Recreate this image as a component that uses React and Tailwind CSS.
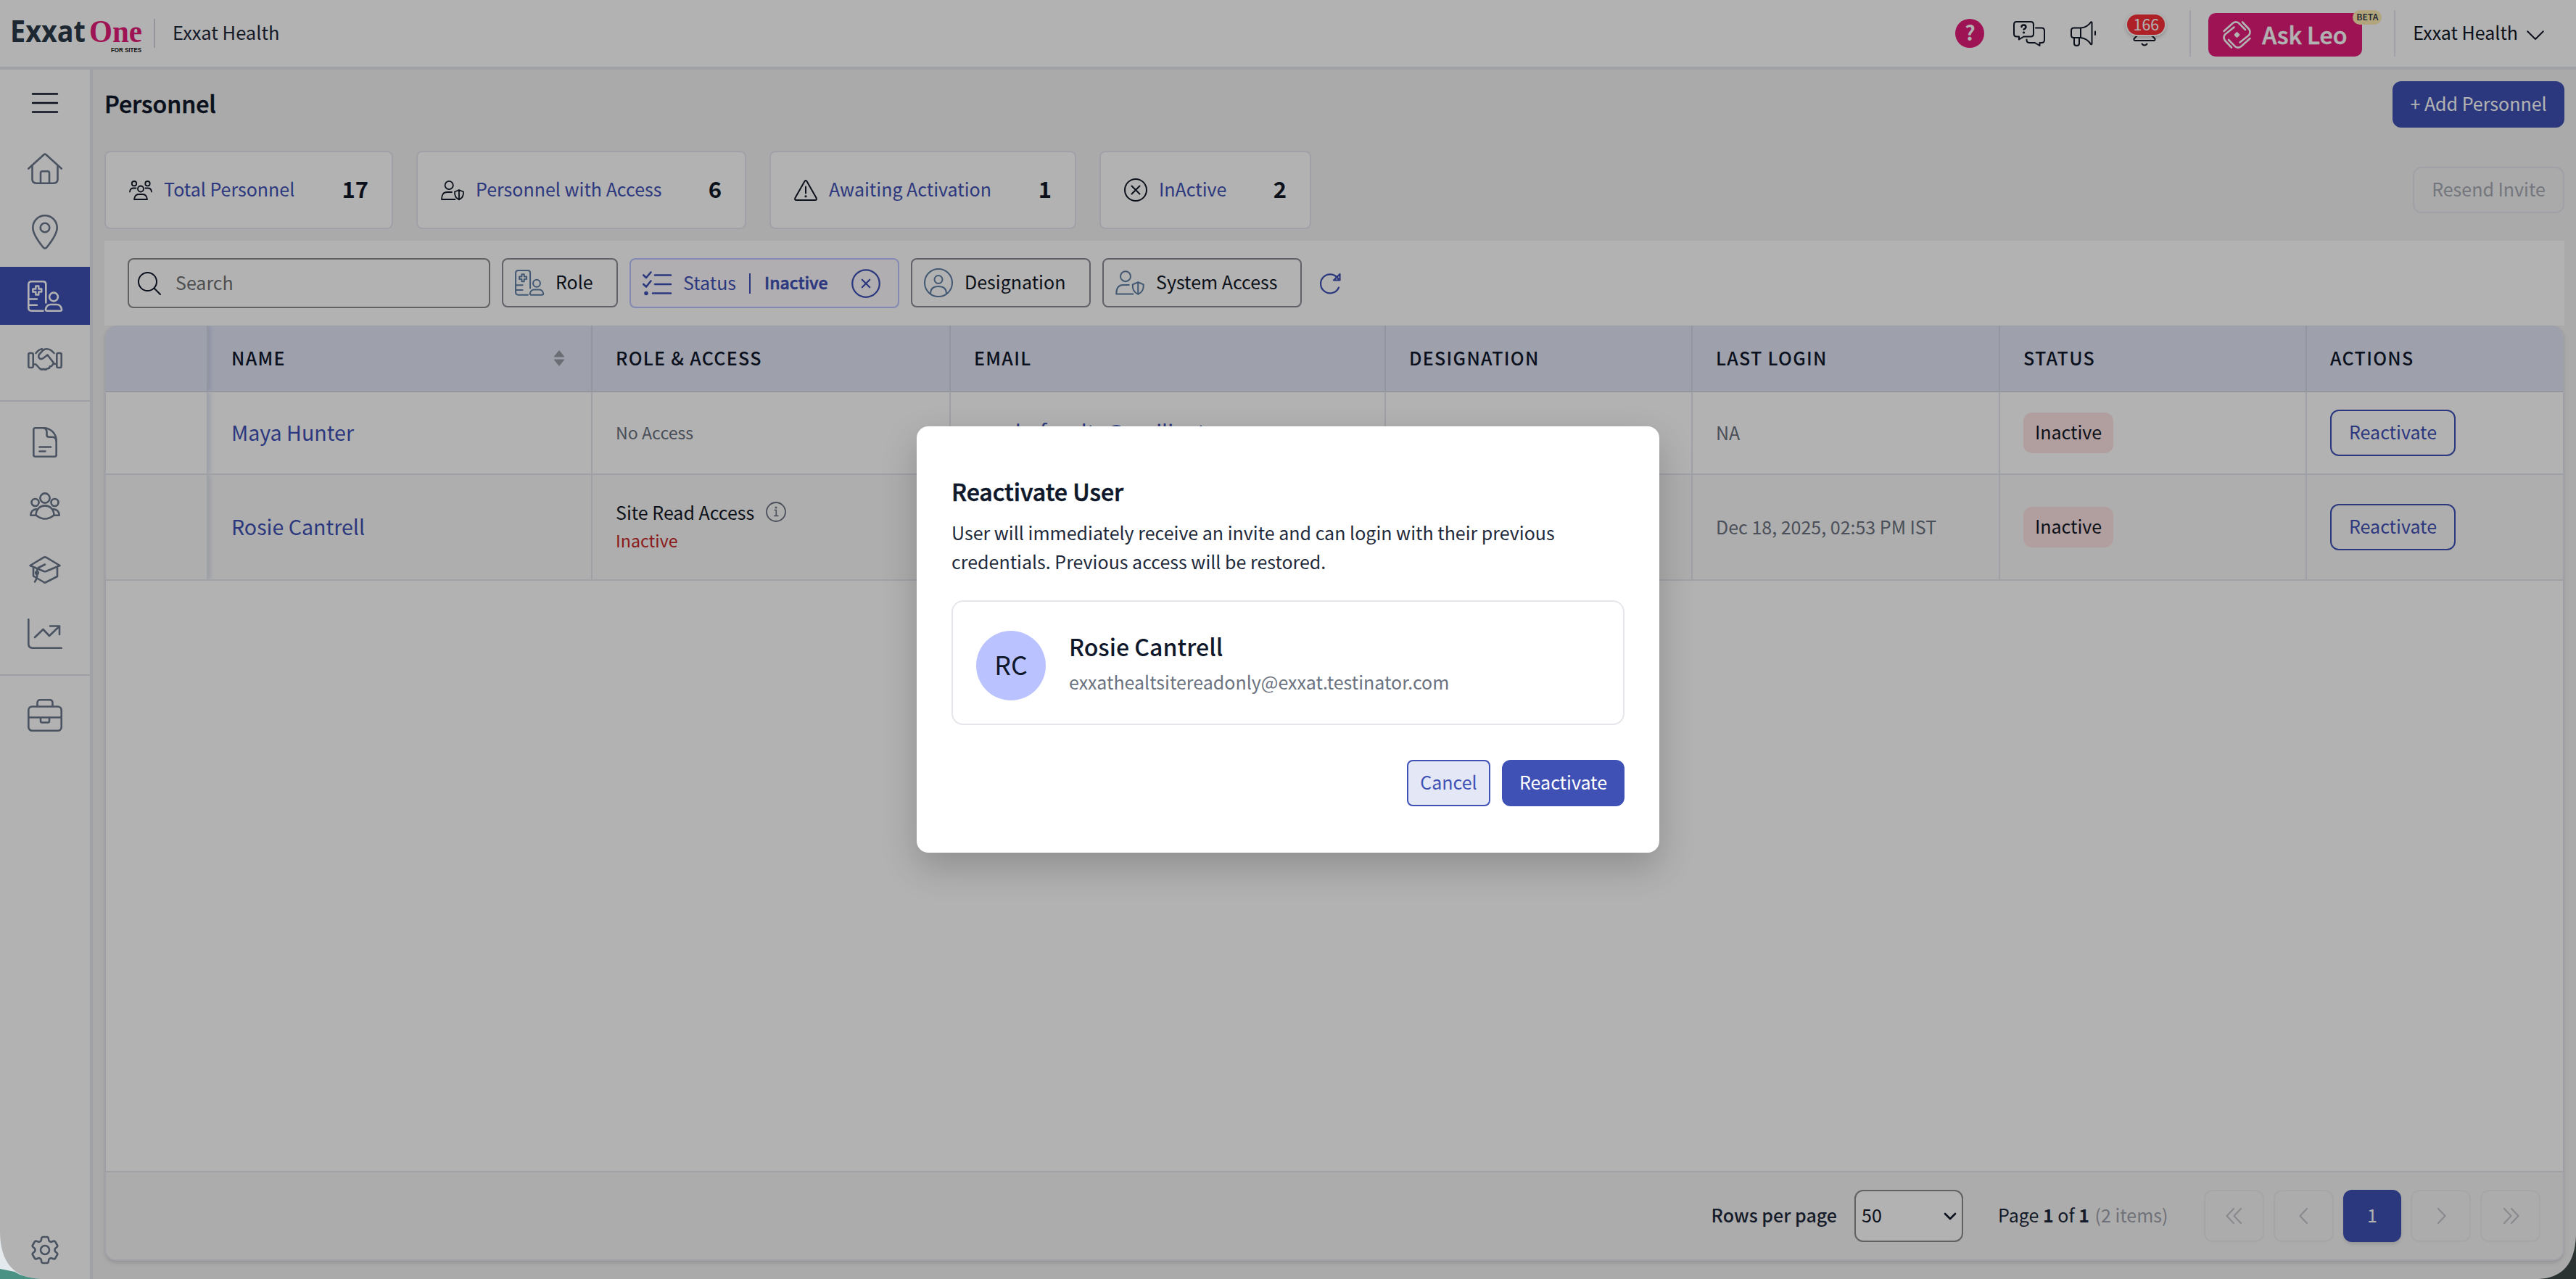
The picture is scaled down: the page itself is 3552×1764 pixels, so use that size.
import React from "react";
import { HiOutlineCog6Tooth } from "react-icons/hi2";

/* ---------- icons ---------- */

function Icon({ w, h, stroke = 2.6, className = "", size, children }) {
  return (
    <svg
      width={size || w}
      height={size ? (size * h) / w : h}
      viewBox={`0 0 ${w} ${h}`}
      fill="none"
      stroke="currentColor"
      strokeWidth={stroke}
      strokeLinecap="round"
      strokeLinejoin="round"
      className={"shrink-0 overflow-visible " + className}
    >
      {children}
    </svg>
  );
}

const MenuIcon = () => (
  <Icon w={36} h={28} stroke={2.4} className="text-[#0f172a]">
    <path d="M1 1.500h34M1 14h34M1 26.500h34" />
  </Icon>
);

const HomeIcon = () => (
  <Icon w={48} h={43}>
    <path d="M1.300 21.500 22.500 2.200q1.500-1.200 3 0L46.700 21.500" />
    <path d="M6.500 17.500V36q0 5.700 5.700 5.700h23.600q5.700 0 5.700-5.700V17.500" />
    <path d="M18 41V27.500q0-2.200 2.200-2.200h7.600q2.200 0 2.200 2.200V41" />
  </Icon>
);

const PinIcon = () => (
  <Icon w={36} h={48}>
    <path d="M18 46.500q-1.500 0-3-2C9 37 1.300 26.500 1.300 18a16.700 16.700 0 0 1 33.400 0c0 8.500-7.700 19-13.700 26.500q-1.500 2-3 2Z" />
    <circle cx="18" cy="18" r="6.300" />
  </Icon>
);

const StaffIcon = ({ size, stroke, className }) => (
  <Icon w={48} h={43} size={size} stroke={stroke} className={className}>
    <path d="M21.500 41.700H5.300q-4 0-4-4V5.300q0-4 4-4h16q4 0 4 4V30.500" />
    <path d="M1.300 25.500h11.500M1.300 33.700h11.500" />
    <path d="M11.300 7.500h4v4h4v4h-4v4h-4v-4h-4v-4h4Z" strokeWidth={2.4} />
    <circle cx="36" cy="22.500" r="5.900" />
    <path d="M27 41.700q-2.500 0-2-2.500Q26.500 33 32 33h8q5.500 0 7 6.200.500 2.500-2 2.500Z" />
  </Icon>
);

const HandshakeIcon = () => (
  <Icon w={48} h={32}>
    <rect x="1.300" y="7" width="6.400" height="20" rx="2" />
    <rect x="40.300" y="7" width="6.400" height="20" rx="2" />
    <path d="M11.500 7q4-5 8.500-5.700M36.500 7q-5-5.700-10-5.700-3 0-5.500 2l-5 5.500q-1.500 3 0 5 2.500 2.500 6 0l5.500-4.300 8.500 11" />
    <path d="M8 22.500h3.500l5 5.500q2.500 2.500 5.500 1 3 1.500 5-.500 3.500 0 3.500-3 3.500 0 4.500-3.500H40" />
  </Icon>
);

const DocIcon = () => (
  <Icon w={34} h={42}>
    <path d="M15 1.300H3.800q-2.500 0-2.500 2.500v34.400q0 2.500 2.500 2.500h26.400q2.500 0 2.500-2.500V19.500C32.700 9 25 1.300 15 1.300Z" />
    <path d="M15 1.300q4.500 1 4.500 5.500v4q0 3 3 3h4.500q5 0 5.700 5.500M9.500 27.500h15.500M9.500 33.500h8" />
  </Icon>
);

const GroupIcon = () => (
  <Icon w={42} h={38}>
    <circle cx="21" cy="8" r="6.600" />
    <circle cx="7.500" cy="14" r="5" />
    <circle cx="34.500" cy="14" r="5" />
    <path d="M8.500 31.500C9 14 33 14 33.500 31.500q-12.500 10-25 0Z" />
    <path d="M10.500 23.500C4.500 22.500 1.500 27 1.300 31.700h7M31.500 23.500c6-1 9 3.500 9.200 8.200h-7" />
  </Icon>
);

const GradIcon = () => (
  <Icon w={44} h={38}>
    <path d="M20.500 1.700q1.500-.700 3 0L42.500 13 23.500 21q-1.500.600-3 0L1.500 13Z" />
    <path d="M6 16v11.500l14.500 8.500q1.500.800 3 0L39 28V16" />
    <path d="M22 11.500 13 16q-2 1.300-2 4v8q0 3.500-3 7.500" />
    <circle cx="11" cy="23" r="1.800" fill="currentColor" />
  </Icon>
);

const ChartIcon = () => (
  <Icon w={48} h={42}>
    <path d="M1.300 1.300v34q0 5.400 5.400 5.400h40" />
    <path d="M10 26l11.500-11 8.500 9L43.500 11M31 10.500h13V22" />
  </Icon>
);

const BriefcaseIcon = () => (
  <Icon w={48} h={45}>
    <rect x="1.300" y="10.500" width="45.400" height="33.200" rx="5" />
    <path d="M13.500 10V5.500q0-4.200 4.200-4.200h12.600q4.200 0 4.200 4.200V10M1.300 25.500h45.400M18 26v4.500q0 2 2 2h8q2 0 2-2V26" />
  </Icon>
);

const TeamIcon = () => (
  <Icon w={32} h={27} stroke={1.8}>
    <circle cx="7" cy="4.200" r="3.200" />
    <circle cx="25.500" cy="4.200" r="3.200" />
    <circle cx="16" cy="11.500" r="4" />
    <path d="M1 15.500q.500-5 5-5h3.500M31 15.500q-.500-5-5-5h-3.500M7 26h18q-1-7-6-7h-6q-5 0-6 7Z" />
  </Icon>
);

const AccessIcon = ({ size, stroke = 1.8, className }) => (
  <Icon w={32} h={27} size={size} stroke={stroke} className={className}>
    <circle cx="11.200" cy="6.500" r="5.600" />
    <path d="M19.500 26H1q0-10 7.500-10H15" />
    <path d="M25 13l6 2.500q.500 8-6 10.800-6.500-2.800-6-10.800ZM25 13v13" />
  </Icon>
);

const WarnIcon = () => (
  <Icon w={32} h={29} stroke={2}>
    <path d="M14.500 2q1.500-2 3 0L30.600 25q1 3-1.600 3H3q-2.600 0-1.600-3ZM16 9.500v9" />
    <circle cx="16" cy="22.800" r=".6" fill="currentColor" />
  </Icon>
);

const CrossCircleIcon = ({ size = 32, stroke = 2, small = false }) => (
  <Icon w={32} h={32} size={size} stroke={stroke}>
    <circle cx="16" cy="16" r="15" />
    <path d={small ? "M11.800 11.800l8.400 8.400M20.200 11.800l-8.400 8.400" : "M10.500 10.500l11 11M21.500 10.500l-11 11"} />
  </Icon>
);

const SearchIcon = () => (
  <Icon w={32} h={32} stroke={2} className="text-[#0f172a]">
    <circle cx="13.500" cy="13.500" r="12.500" />
    <path d="M22.500 22.500 31 31" />
  </Icon>
);

const ChecklistIcon = () => (
  <Icon w={40} h={33} stroke={2.6}>
    <path d="M1.300 5.500l3.700 3.500L11.500 1.500M1.300 18l3.700 3.500L11.500 13.500M17 5.500h22M17 18h22M14 30.500h25" />
    <circle cx="5" cy="30.500" r="1.500" fill="currentColor" />
  </Icon>
);

const UserCircleIcon = () => (
  <Icon w={40} h={40} stroke={2} className="text-[#5f7fa5]">
    <circle cx="20" cy="20" r="19" />
    <circle cx="20" cy="15.500" r="5.500" />
    <path d="M9 35q0-10 11-10t11 10" />
  </Icon>
);

const RefreshIcon = () => (
  <Icon w={30} h={30} stroke={2.2} className="text-[#3f51b5]">
    <path d="M27 20.500A13 13 0 1 1 25 7l2.500 3M28.500 2v8.500H20Z" />
  </Icon>
);

const ChatIcon = () => (
  <Icon w={44} h={35} stroke={2}>
    <path d="M4.500 1H24q4 0 4 4v12.500q0 4-4 4H14.500L8 25.500v-4H4.500q-3.500 0-3.500-4V5q0-4 3.500-4Z" />
    <path d="M11.500 8q0-2.500 3-2.500t3 2.700q0 1.800-3 3.300" strokeWidth={2.4} />
    <circle cx="14.500" cy="15.800" r=".6" fill="currentColor" />
    <path d="M31 9.500h8q4 0 4 4V26q0 4-4 4h-2.500v4L30 30h-7.500q-4 0-4-4v-.500" />
  </Icon>
);

const MegaphoneIcon = () => (
  <Icon w={36} h={35} stroke={2}>
    <path d="M14 9.500H4.500Q1 9.500 1 13v6.500Q1 23 4.500 23H14ZM14 9.500Q23 9 28 1.500q1.500-1 1.500 1V31q0 2-1.500 1Q23 24 14 23M5 23v8q0 3 3.500 3t3.500-3v-8M34 14.500v4.500" />
  </Icon>
);

const BellIcon = () => (
  <Icon w={32} h={36} stroke={2}>
    <path d="M6 21v-8a10 10 0 0 1 20 0v8l4.500 4.500q.500 2.500-2 2.500h-25q-2.500 0-2-2.500ZM12.500 32.500q3.500 4 7 0" />
  </Icon>
);

const LeoIcon = () => (
  <Icon w={39} h={38} stroke={2.6}>
    <path d="M1.500 14 14 2.800q4-2.800 8 0L31 12" />
    <path d="M27 1.500 36 11q3 4.500 0 8.500L23.500 29.500" />
    <path d="M37.500 24 25 35.200q-4 2.800-8 0L8 26" />
    <path d="M12 36.500 3 27q-3-4.500 0-8.500L15.500 8.500" />
    <path d="M19.500 16.500 22 19l-2.500 2.500L17 19Z" fill="currentColor" />
  </Icon>
);

const ChevronDown = () => (
  <Icon w={24} h={13} stroke={2}>
    <path d="M1.200 1.200 12 12 22.800 1.200" />
  </Icon>
);

const InfoIcon = () => (
  <Icon w={28} h={28} stroke={1.8} className="text-[#6b7280]">
    <circle cx="14" cy="14" r="13" />
    <path d="M12 11.500h2.300v8M11.500 19.500h5.500" strokeWidth={1.6} />
    <circle cx="14" cy="8" r=".6" fill="currentColor" />
  </Icon>
);

/* ---------- header ---------- */

function Logo() {
  return (
    <svg width="182" height="50" viewBox="0 0 182 50" className="shrink-0 overflow-visible">
      <text x="-2" y="37" fontSize="41" fontWeight="700" fill="#2b3a4a" textLength="104" lengthAdjust="spacingAndGlyphs" className="font-['Open_Sans',sans-serif]">
        Exxat
      </text>
      <text x="107" y="37" fontSize="45" fontWeight="700" fill="#e31c79" textLength="73" lengthAdjust="spacingAndGlyphs" className="font-['Liberation_Serif',serif]">
        One
      </text>
      <text x="137" y="51" fontSize="9" fontWeight="700" fill="#111" textLength="42" lengthAdjust="spacingAndGlyphs" className="font-['Liberation_Sans',sans-serif]">
        FOR SITES
      </text>
    </svg>
  );
}

function Header() {
  return (
    <header className="flex h-24 shrink-0 items-center justify-between border-b-4 border-[#e5e7ee] bg-white pl-4 pr-11 text-[#1e293b]">
      <div className="flex items-center">
        <Logo />
        <div className="ml-3.5 h-10 w-0.5 bg-[#d4d5de]" />
        <span className="ml-6 pb-1 text-[25.5px]">Exxat Health</span>
      </div>
      <div className="flex items-center text-[#111827]">
        <div className="flex size-10 items-center justify-center rounded-full bg-[#e31c79] pb-1 text-[28px] font-bold text-white">
          ?
        </div>
        <div className="ml-10">
          <ChatIcon />
        </div>
        <div className="ml-[35px]">
          <MegaphoneIcon />
        </div>
        <div className="relative ml-[50px]">
          <BellIcon />
          <span className="absolute -left-2 -top-2 flex h-7 w-[52px] items-center justify-center rounded-full bg-[#fa3239] pb-[3px] text-[21.4px] text-white shadow-[0_0_0_2px_#fff,0_2px_6px_rgba(0,0,0,0.4)]">
            166
          </span>
        </div>
        <div className="ml-[46px] h-16 w-0.5 bg-[#e5e6ef]" />
        <div className="relative ml-6 mt-1 flex h-15 w-[212px] items-center rounded-[10px] bg-[#e31c79] pl-5 text-[32.1px] font-medium text-white">
          <LeoIcon />
          <span className="ml-[15px] pb-0.5 [-webkit-text-stroke:0.6px]">Ask Leo</span>
          <span className="absolute -right-[27px] -top-1 flex h-5 w-10 items-center justify-center rounded-full bg-[#ffecb3] pb-0.5 text-[12.3px] font-medium text-[#1e293b]">
            BETA
          </span>
        </div>
        <div className="ml-11 h-16 w-0.5 bg-[#e5e6ef]" />
        <span className="ml-6 pb-1">Exxat Health</span>
        <div className="ml-3 pt-1">
          <ChevronDown />
        </div>
      </div>
    </header>
  );
}

/* ---------- sidebar ---------- */

function NavItem({ active = false, children }) {
  return (
    <div
      className={
        "flex h-20 w-full shrink-0 items-center justify-center " +
        (active ? "bg-[#3f51b5] text-white" : "text-[#6b778b]")
      }
    >
      {children}
    </div>
  );
}

function Sidebar() {
  return (
    <nav className="flex w-32 shrink-0 flex-col gap-2 border-r-4 border-[#e6e6ef] bg-white pt-1.5">
      <div className="mb-0.5">
        <NavItem>
          <MenuIcon />
        </NavItem>
      </div>
      <NavItem>
        <HomeIcon />
      </NavItem>
      <NavItem>
        <PinIcon />
      </NavItem>
      <NavItem active>
        <StaffIcon />
      </NavItem>
      <NavItem>
        <HandshakeIcon />
      </NavItem>
      <div className="my-2 h-0.5 shrink-0 bg-[#e2e3ec]" />
      <NavItem>
        <DocIcon />
      </NavItem>
      <NavItem>
        <GroupIcon />
      </NavItem>
      <NavItem>
        <GradIcon />
      </NavItem>
      <NavItem>
        <ChartIcon />
      </NavItem>
      <div className="mb-1.5 mt-2 h-0.5 shrink-0 bg-[#e2e3ec]" />
      <NavItem>
        <BriefcaseIcon />
      </NavItem>
      <div className="mt-auto">
        <NavItem>
          <HiOutlineCog6Tooth className="size-12" strokeWidth={1.3} />
        </NavItem>
      </div>
    </nav>
  );
}

/* ---------- page ---------- */

const stats = [
  { label: "Total Personnel", value: 17, icon: <TeamIcon />, width: "w-[398px]" },
  { label: "Personnel with Access", value: 6, icon: <AccessIcon />, width: "w-[455px]" },
  { label: "Awaiting Activation", value: 1, icon: <WarnIcon />, width: "w-[423px]" },
  { label: "InActive", value: 2, icon: <CrossCircleIcon />, width: "w-[292px]" },
];

function StatCard({ label, value, icon, width }) {
  return (
    <div className={"flex h-[108px] items-center rounded-lg border-2 border-[#e5e6ef] bg-white px-8 text-[#111827] " + width}>
      {icon}
      <span className="ml-4 pb-1 text-[#3f51b5]">{label}</span>
      <span className="ml-auto pb-1 text-[31px] font-bold">{value}</span>
    </div>
  );
}

function FilterChip({ icon, label, width }) {
  return (
    <div className={"flex h-[68px] items-center gap-4 rounded-lg border-2 border-[#8c8d95] px-4 text-[#111827] " + width}>
      {icon}
      <span className="pb-1">{label}</span>
    </div>
  );
}

function Toolbar() {
  return (
    <div className="flex h-[117px] shrink-0 items-start gap-4 bg-white pl-8 pt-6">
      <div className="flex h-[69px] w-[500px] items-center gap-5 rounded-lg border-2 border-[#8c8c8c] pl-3">
        <SearchIcon />
        <span className="pb-1 text-[#6f7175]">Search</span>
      </div>
      <FilterChip label="Role" width="w-40" icon={<StaffIcon size={40} stroke={2.4} className="text-[#5f7fa5]" />} />
      <div className="flex h-[69px] w-[372px] items-center rounded-lg border-2 border-[#bcc5ff] bg-[#fefaff] pl-4 text-[#3f51b5]">
        <ChecklistIcon />
        <span className="ml-4 pb-1">Status</span>
        <span className="ml-[18px] h-7 w-0.5 bg-[#3f51b5]" />
        <span className="ml-[19px] pb-1 text-[23px] font-medium [-webkit-text-stroke:0.6px]">Inactive</span>
        <div className="ml-8">
          <CrossCircleIcon size={40} stroke={1.8} small />
        </div>
      </div>
      <FilterChip label="Designation" width="w-[248px]" icon={<UserCircleIcon />} />
      <FilterChip label="System Access" width="w-[275px]" icon={<AccessIcon size={40} stroke={1.6} className="text-[#5f7fa5]" />} />
      <div className="ml-2 mt-5">
        <RefreshIcon />
      </div>
    </div>
  );
}

const grid = "grid grid-cols-[141px_530px_494px_600px_423px_424px_423px_1fr]";
const headings = ["", "Name", "Role & Access", "Email", "Designation", "Last Login", "Status", "Actions"];

// soft edge to the right of the pinned first column
const pinned = "shadow-[3px_0_6px_rgba(63,81,181,0.16)] [clip-path:inset(0_-12px_0_0)]";

function Cell({ className = "", border = "border-[#e5e6ef]", children }) {
  return <div className={"flex items-center border-r-2 px-8 last:border-r-0 " + border + " " + className}>{children}</div>;
}

function Row({ name, role, email, lastLogin, className }) {
  return (
    <div className={grid + " border-b-2 border-[#e5e6ef] " + className}>
      <Cell className={pinned} />
      <Cell>
        <span className="pb-0.5 text-[28.6px] text-[#3f51b5]">{name}</span>
      </Cell>
      <Cell>{role}</Cell>
      <Cell>{email && <span className="pb-1 text-[28.6px] text-[#3f51b5]">{email}</span>}</Cell>
      <Cell />
      <Cell>
        <span className="pb-0.5 text-[#6b7280]">{lastLogin}</span>
      </Cell>
      <Cell>
        <span className="flex h-14 w-[124px] items-center justify-center rounded-xl bg-[#fee2e2] pb-1 text-[#111827]">Inactive</span>
      </Cell>
      <Cell>
        <span className="flex h-16 w-[173px] items-center justify-center rounded-xl border-2 border-[#3f51b5] pb-1 text-[#3f51b5]">
          Reactivate
        </span>
      </Cell>
    </div>
  );
}

function PageButton({ double = false, flip = false }) {
  return (
    <div className="flex h-18 w-[83px] items-center justify-center rounded-xl border-2 border-[#eeeef1] text-[#c4c6cc]">
      <Icon w={22} h={22} stroke={2.2} className={flip ? "-scale-x-100" : ""}>
        {double ? <path d="M10 1 .5 11 10 21M20 1 10.500 11 20 21" /> : <path d="M15 1 5.500 11 15 21" />}
      </Icon>
    </div>
  );
}

function Pagination() {
  return (
    <div className="flex h-[122px] shrink-0 items-center justify-end border-t-2 border-[#e5e6ef] bg-[#f7f7f7] pr-[31px] text-[#1e293b]">
      <span className="pb-1 font-medium">Rows per page</span>
      <div className="ml-6 flex h-18 w-[150px] items-center justify-between rounded-xl border-2 border-[#8c8c8c] bg-white pl-2 pr-2 text-[#0f172a]">
        <span className="pb-1">50</span>
        <Icon w={16} h={9} stroke={2.6}>
          <path d="M1 1l7 7 7-7" />
        </Icon>
      </div>
      <span className="ml-12 w-[284px] whitespace-nowrap pb-1">
        Page <b className="font-bold">1</b> of <b className="font-bold">1</b> <span className="ml-0.5 text-[#a0a2ac]">(2 items)</span>
      </span>
      <div className="flex gap-[13px]">
        <PageButton double />
        <PageButton />
        <div className="flex h-18 w-20 items-center justify-center rounded-xl bg-[#3f51b5] pb-1 text-white shadow-md">1</div>
        <PageButton flip />
        <PageButton double flip />
      </div>
    </div>
  );
}

function PersonnelTable() {
  return (
    <div className="flex h-[1290px] flex-col overflow-hidden rounded-2xl border-2 border-t-0 border-[#e5e6ef] bg-white shadow-md">
      <div className={grid + " h-[92px] shrink-0 border-b-2 border-[#d5d7e4] bg-[#e3e6f7] font-medium uppercase tracking-[1.3px] text-[#0f172a]"}>
        {headings.map((h, i) => (
          <Cell key={i} border="border-[#d5d7e4]" className={i === 0 ? pinned : ""}>
            <span className="pb-0.5">{h}</span>
            {h === "Name" && (
              <svg width="16" height="22" viewBox="0 0 16 22" className="ml-auto mr-1" fill="#9a9da6">
                <path d="M8 0l7 8.500q.500 1-.500 1h-13q-1 0-.500-1ZM8 22l7-8.500q.500-1-.500-1h-13q-1 0-.500 1Z" />
              </svg>
            )}
          </Cell>
        ))}
      </div>
      <Row
        className="h-[114px] shrink-0"
        name="Maya Hunter"
        role={<span className="pb-0.5 text-[23.2px] text-[#6b7280]">No Access</span>}
        email="sandrafaculty@mailinator.com"
        lastLogin="NA"
      />
      <Row
        className="h-[146px] shrink-0 bg-[#fafafa]"
        name="Rosie Cantrell"
        role={
          <div className="flex flex-col pb-1">
            <div className="flex items-center gap-4 text-[#111827]">
              Site Read Access
              <InfoIcon />
            </div>
            <span className="text-[23.2px] leading-[38px] text-[#c62828]">Inactive</span>
          </div>
        }
        lastLogin="Dec 18, 2025, 02:53 PM IST"
      />
      <div className="grow" />
      <Pagination />
    </div>
  );
}

/* ---------- modal ---------- */

function ReactivateModal() {
  return (
    <div className="flex h-[588px] w-[1024px] flex-col rounded-2xl bg-white px-12 pt-[67px] text-[#0f172a] shadow-[0_20px_50px_rgba(0,0,0,0.2)]">
      <h2 className="text-[32.1px] font-medium leading-[44px] [-webkit-text-stroke:0.6px]">Reactivate User</h2>
      <p className="mt-[15px] leading-10 text-[#1e293b]">
        User will immediately receive an invite and can login with their previous
        <br />
        credentials. Previous access will be restored.
      </p>
      <div className="mt-[34px] flex h-[172px] items-center rounded-2xl border-2 border-[#e6e6ea] px-8 pt-2">
        <div className="flex size-24 items-center justify-center rounded-full bg-[#bac3ff] pb-1 text-[35.7px]">RC</div>
        <div className="ml-8 flex flex-col pb-2">
          <span className="text-[32.1px] font-medium leading-[46px]">Rosie Cantrell</span>
          <span className="mt-1.5 leading-10 text-[#6b7280]">exxathealtsitereadonly@exxat.testinator.com</span>
        </div>
      </div>
      <div className="mt-12 flex justify-end gap-4">
        <div className="flex h-16 w-[115px] items-center justify-center rounded-lg border-2 border-[#3f51b5] bg-[#e3e7f6] pb-1 text-[#3f51b5]">Cancel</div>
        <div className="flex h-16 w-[169px] items-center justify-center rounded-xl bg-[#3f51b5] pb-1 text-white">Reactivate</div>
      </div>
    </div>
  );
}

export default function App() {
  return (
    <div className="relative flex h-[1764px] w-[3552px] flex-col overflow-hidden bg-[#f4f4f4] font-['Noto_Sans_CJK_SC',sans-serif] text-[25px] leading-10">
      <Header />
      <div className="flex grow">
        <Sidebar />
        <main className="flex grow flex-col px-4 pt-4">
          <div className="flex h-16 items-center justify-between">
            <h1 className="pb-1 text-[32.1px] font-medium text-[#0f172a] [-webkit-text-stroke:0.6px]">Personnel</h1>
            <div className="flex h-16 w-[237px] items-center justify-center rounded-xl bg-[#3f51b5] pb-1 text-white">+ Add Personnel</div>
          </div>
          <div className="mt-8 flex items-center gap-8">
            {stats.map((s) => (
              <StatCard key={s.label} {...s} />
            ))}
            <div className="ml-auto flex h-16 w-[209px] items-center justify-center rounded-xl border-2 border-[#e5e6ef] pb-1 text-[#a6a9b5]">
              Resend Invite
            </div>
          </div>
          <div className="mt-4">
            <Toolbar />
            <PersonnelTable />
          </div>
        </main>
      </div>

      <div className="absolute inset-0 flex items-center justify-center bg-black/30">
        <ReactivateModal />
      </div>

      {/* desktop showing behind the rounded window corners */}
      <svg width="56" height="64" viewBox="0 0 56 64" className="absolute bottom-0 left-0">
        <path d="M0 0Q1 62 56 64H0Z" fill="#e3e9ed" />
        <path d="M0 50q10 2 20 4 12 8 36 10H0Z" fill="#4a9284" />
      </svg>
      <svg width="60" height="60" viewBox="0 0 60 60" className="absolute bottom-0 right-0">
        <path d="M60 0Q58 58 8 60H60Z" fill="#2a3331" />
      </svg>
    </div>
  );
}
